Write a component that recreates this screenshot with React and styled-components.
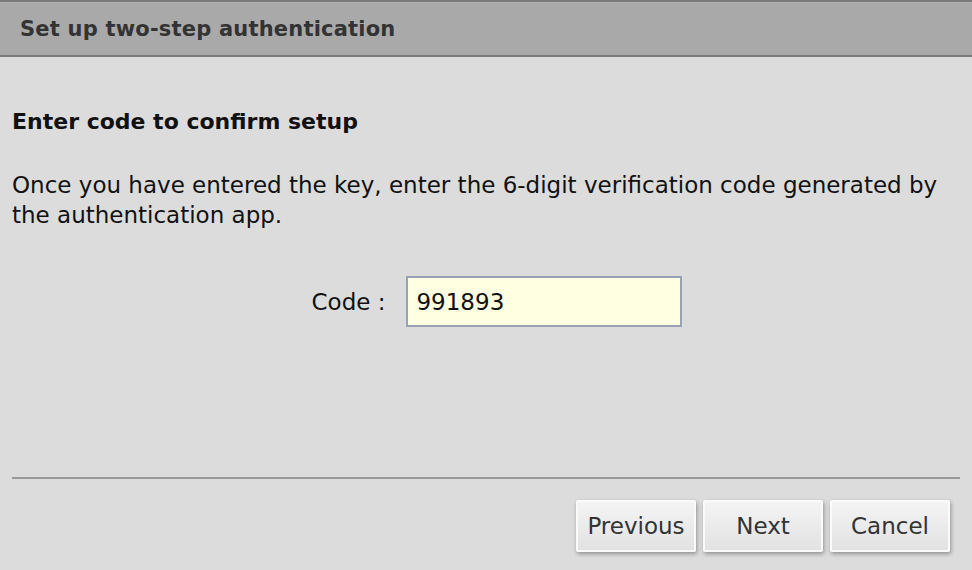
import React from 'react';
import styled, { createGlobalStyle } from 'styled-components';

const GlobalStyle = createGlobalStyle`
    html, body {
        margin: 0;
        padding: 0;
        background: #dcdcdc;
    }
    body {
        font-family: "DejaVu Sans", "Liberation Sans", sans-serif;
    }
`;

const Dialog = styled.div`
    width: 972px;
    height: 570px;
    display: flex;
    flex-direction: column;
    background: #dcdcdc;
    overflow: hidden;
`;

const TitleBar = styled.div`
    height: 53px;
    display: flex;
    align-items: center;
    padding-left: 20px;
    background: #a9a9a9;
    border-top: 2px solid #7b7b7b;
    border-bottom: 2px solid #7b7b7b;
    box-shadow: inset 0 1px 0 #b4b4b4;
`;

const Title = styled.h1`
    margin: 0;
    font-size: 21px;
    font-weight: bold;
    color: #333333;
    letter-spacing: 0.2px;
`;

const Body = styled.div`
    flex: 1;
    display: flex;
    flex-direction: column;
    padding: 52px 12px 0 12px;
`;

const Heading = styled.h2`
    margin: 0;
    font-size: 22px;
    font-weight: bold;
    color: #111;
`;

const Text = styled.p`
    margin: 36px 0 0 0;
    font-size: 23px;
    line-height: 30px;
    color: #111;
`;

const FieldRow = styled.div`
    display: flex;
    align-items: center;
    justify-content: center;
    gap: 21px;
    margin-top: 46px;
    padding-left: 22px;
`;

const Label = styled.label`
    font-size: 23px;
    color: #111;
`;

const CodeInput = styled.input`
    width: 276px;
    height: 51px;
    box-sizing: border-box;
    padding: 0 8px;
    border: 2px solid #98a2b3;
    background: #ffffe2;
    font-family: inherit;
    font-size: 23px;
    color: #111;
    outline: none;
    caret-color: #000;
`;

const Divider = styled.hr`
    margin: auto 0 0 0;
    border: 0;
    border-top: 2px solid #9a9a9a;
`;

const ButtonRow = styled.div`
    display: flex;
    justify-content: flex-end;
    gap: 7px;
    padding: 21px 10px 18px 0;
`;

const Button = styled.button`
    width: 120px;
    height: 52px;
    border: 2px solid #fafafa;
    border-radius: 2px;
    background: linear-gradient(#f4f4f4, #e2e2e2);
    box-shadow: 1px 2px 4px rgba(0, 0, 0, 0.35);
    font-family: inherit;
    font-size: 23px;
    color: #333;
    padding: 0;
`;

const App = () => {
    return (
        <>
            <GlobalStyle />
            <Dialog>
                <TitleBar>
                    <Title>Set up two-step authentication</Title>
                </TitleBar>
                <Body>
                    <Heading>Enter code to confirm setup</Heading>
                    <Text>
                        Once you have entered the key, enter the 6-digit
                        verification code generated by the authentication app.
                    </Text>
                    <FieldRow>
                        <Label htmlFor="code">Code :</Label>
                        <CodeInput id="code" defaultValue="991893" autoFocus />
                    </FieldRow>
                    <Divider />
                    <ButtonRow>
                        <Button>Previous</Button>
                        <Button>Next</Button>
                        <Button>Cancel</Button>
                    </ButtonRow>
                </Body>
            </Dialog>
        </>
    );
};

export default App;
